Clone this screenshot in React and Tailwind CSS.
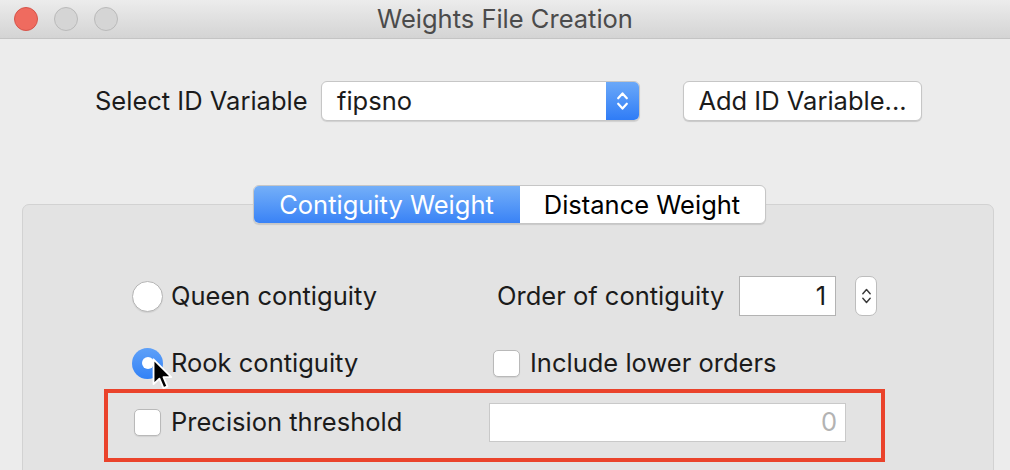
import React from "react";

const Chevrons = ({ className = "", stroke = "#fff", width = 2 }) => (
  <svg className={className} viewBox="0 0 12 24" fill="none" stroke={stroke} strokeWidth={width} strokeLinecap="round" strokeLinejoin="round">
    <path d="M2 9.5 L6 5 L10 9.5" />
    <path d="M2 14.5 L6 19 L10 14.5" />
  </svg>
);

const Checkbox = () => (
  <div className="w-[27px] h-[27px] rounded-[5px] bg-white border border-[#b9b9b9] shadow-[0_1px_1px_rgba(0,0,0,0.08)]" />
);

function App() {
  return (
    <div className="relative w-[1010px] h-[470px] overflow-hidden bg-[#ececec] text-[#1b1b1b] font-['Inter',_'Liberation_Sans',_sans-serif]">
      {/* title bar */}
      <div className="grid grid-cols-[1fr_auto_1fr] items-center h-[39px] border-b border-[#c4c4c4] bg-gradient-to-b from-[#ececec] to-[#d4d4d4]">
        <div className="flex items-center gap-[16px] pl-[14px]">
          <div className="w-[24px] h-[24px] rounded-full bg-[#ef6b5f] border border-[#d6544a]" />
          <div className="w-[24px] h-[24px] rounded-full bg-[#d5d5d5] border border-[#bababa]" />
          <div className="w-[24px] h-[24px] rounded-full bg-[#d5d5d5] border border-[#bababa]" />
        </div>
        <div className="text-[25.5px] text-[#4b4b4b] leading-none">Weights File Creation</div>
        <div />
      </div>

      {/* ID variable row */}
      <div className="flex items-center h-[40px] mt-[42px] pl-[95px] text-[25.5px] leading-none">
        <div className="w-[226px]">Select ID Variable</div>
        <div className="flex w-[319px] h-[40px] rounded-[6px] bg-white border border-[#c6c6c6] shadow-[0_1px_1px_rgba(0,0,0,0.12)] overflow-hidden">
          <div className="flex-1 flex items-center pl-[15px]">fipsno</div>
          <div className="w-[33px] flex items-center justify-center bg-gradient-to-b from-[#6aa8f8] to-[#2f7cf6]">
            <Chevrons className="w-[13px] h-[28px]" />
          </div>
        </div>
        <div className="ml-[43px] w-[239px] h-[40px] flex items-center justify-center rounded-[6px] bg-white border border-[#c6c6c6] shadow-[0_1px_1px_rgba(0,0,0,0.15)]">
          Add ID Variable...
        </div>
      </div>

      {/* group box */}
      <div className="ml-[22px] mt-[83px] w-[972px] h-[320px] rounded-[7px] bg-[#e3e3e3] border border-[#d2d2d2]">
        <div className="flex justify-center -mt-[20px] pl-[2px]">
          <div className="flex h-[39px] rounded-[6px] border border-[#c6c6c6] bg-white shadow-[0_1px_1px_rgba(0,0,0,0.12)] overflow-hidden text-[25.5px] leading-none">
            <div className="w-[266px] flex items-center justify-center text-white bg-gradient-to-b from-[#74aff8] to-[#3982f6]">
              Contiguity Weight
            </div>
            <div className="w-[245px] flex items-center justify-center text-black">Distance Weight</div>
          </div>
        </div>

        <div className="grid grid-cols-[361px_auto] pl-[109px] mt-[52px] text-[25.5px] leading-none">
          <div className="flex items-center h-[40px] gap-[8px]">
            <div className="w-[31px] h-[31px] rounded-full bg-white border border-[#b5b5b5] shadow-[0_1px_1px_rgba(0,0,0,0.08)]" />
            <span>Queen contiguity</span>
          </div>
          <div className="flex items-center h-[40px]">
            <span className="w-[246px] pl-[4px]">Order of contiguity</span>
            <div className="w-[97px] h-[40px] flex items-center justify-end pr-[9px] bg-white border border-[#b3b3b3]">1</div>
            <div className="ml-[19px] w-[22px] h-[40px] flex items-center justify-center rounded-[7px] bg-white border border-[#bdbdbd]">
              <Chevrons className="w-[11px] h-[26px]" stroke="#3a3a3a" width={1.6} />
            </div>
          </div>

          <div className="flex items-center h-[32px] mt-[31px] gap-[8px]">
            <div className="w-[31px] h-[31px] rounded-full flex items-center justify-center bg-gradient-to-b from-[#5ea0f8] to-[#3282f6]">
              <div className="w-[12px] h-[12px] rounded-full bg-white" />
            </div>
            <span>Rook contiguity</span>
          </div>
          <div className="flex items-center h-[32px] mt-[31px] gap-[10px]">
            <Checkbox />
            <span>Include lower orders</span>
          </div>
        </div>

        <div className="ml-[81px] mt-[10px] w-[781px] h-[73px] border-4 border-[#ea432b] flex items-center pl-[26px] pb-[7px] text-[25.5px] leading-none">
          <Checkbox />
          <span className="ml-[10px] w-[318px]">Precision threshold</span>
          <div className="w-[357px] h-[39px] flex items-center justify-end pr-[8px] bg-white border border-[#c9c9c9] text-[#b3b3b3]">0</div>
        </div>
      </div>

      {/* mouse pointer */}
      <svg className="absolute left-[152px] top-[358px] w-[24px] h-[34px]" viewBox="0 0 18 26">
        <path d="M1 1 L1 20 L5.5 15.8 L8.6 23 L11.6 21.7 L8.6 14.6 L14.6 14.6 Z" fill="#000" stroke="#fff" strokeWidth="1.4" strokeLinejoin="round" />
      </svg>
    </div>
  );
}

export default App;
